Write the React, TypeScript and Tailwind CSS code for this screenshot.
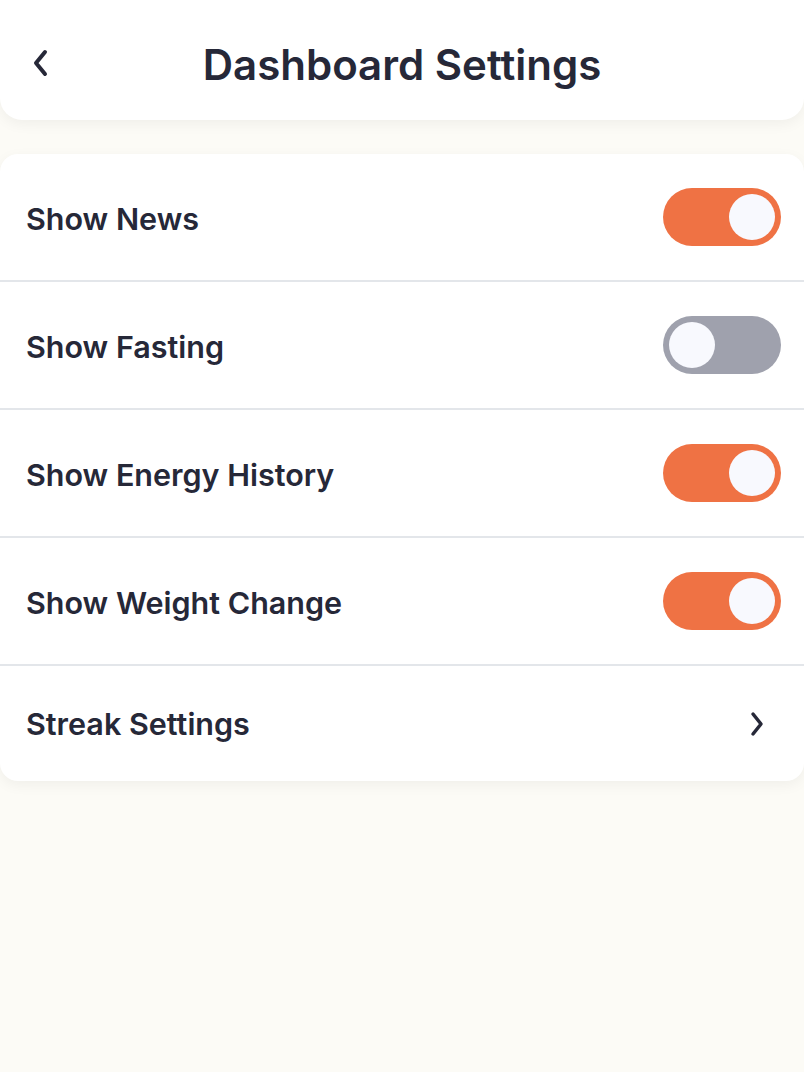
import { useState } from 'react';

/* --- Toggle --- */
const Toggle = ({ on, onClick }: { on: boolean; onClick: () => void }) => (
	<button
		onClick={onClick}
		className={`flex items-center w-[118px] h-[58px] rounded-full px-[6px] shrink-0 ${on ? 'bg-[#ef7244] justify-end' : 'bg-[#9fa1ad] justify-start'}`}
	>
		<span className="block w-[46px] h-[46px] rounded-full bg-[#f8f9fe]" />
	</button>
);

const rows = [
	{ label: 'Show News', on: true },
	{ label: 'Show Fasting', on: false },
	{ label: 'Show Energy History', on: true },
	{ label: 'Show Weight Change', on: true },
];

/* --- App --- */
export default function App() {
	const [state, setState] = useState(rows.map(r => r.on));

	return (
		<div className="min-h-[1072px] w-full bg-[#fcfbf6] text-[#262838]" style={{ fontFamily: 'Inter, "Noto Sans", sans-serif' }}>
			<header className="relative flex items-center justify-center h-[120px] bg-white rounded-b-[22px] shadow-[0_4px_14px_rgba(0,0,0,0.05)]">
				<button className="absolute left-[26px] top-[46px] w-[30px] h-[34px] flex items-center justify-center">
					<svg width="20" height="28" viewBox="0 0 20 28" fill="none" stroke="#262838" strokeWidth="4" strokeLinecap="round" strokeLinejoin="round">
						<path d="M14 3 L5 14 L14 25" />
					</svg>
				</button>
				<h1 className="text-[42px] font-semibold mt-[8px]">Dashboard Settings</h1>
			</header>

			<div className="mt-[34px] bg-white rounded-[18px] shadow-[0_4px_14px_rgba(0,0,0,0.05)] overflow-hidden">
				{rows.map((r, i) => (
					<div key={r.label} className="flex items-center justify-between h-[128px] pl-[26px] pr-[23px] border-b-2 border-[#e3e6ea]">
						<span className="text-[30.5px] font-semibold mt-[3px]">{r.label}</span>
						<Toggle on={state[i]} onClick={() => setState(s => s.map((v, j) => (j === i ? !v : v)))} />
					</div>
				))}
				<div className="flex items-center justify-between h-[115px] pl-[26px] pr-[38px]">
					<span className="text-[30.5px] font-semibold">Streak Settings</span>
					<svg width="18" height="26" viewBox="0 0 18 26" fill="none" stroke="#262838" strokeWidth="3.5" strokeLinecap="round" strokeLinejoin="round">
						<path d="M5 3 L13 13 L5 23" />
					</svg>
				</div>
			</div>
		</div>
	);
}
